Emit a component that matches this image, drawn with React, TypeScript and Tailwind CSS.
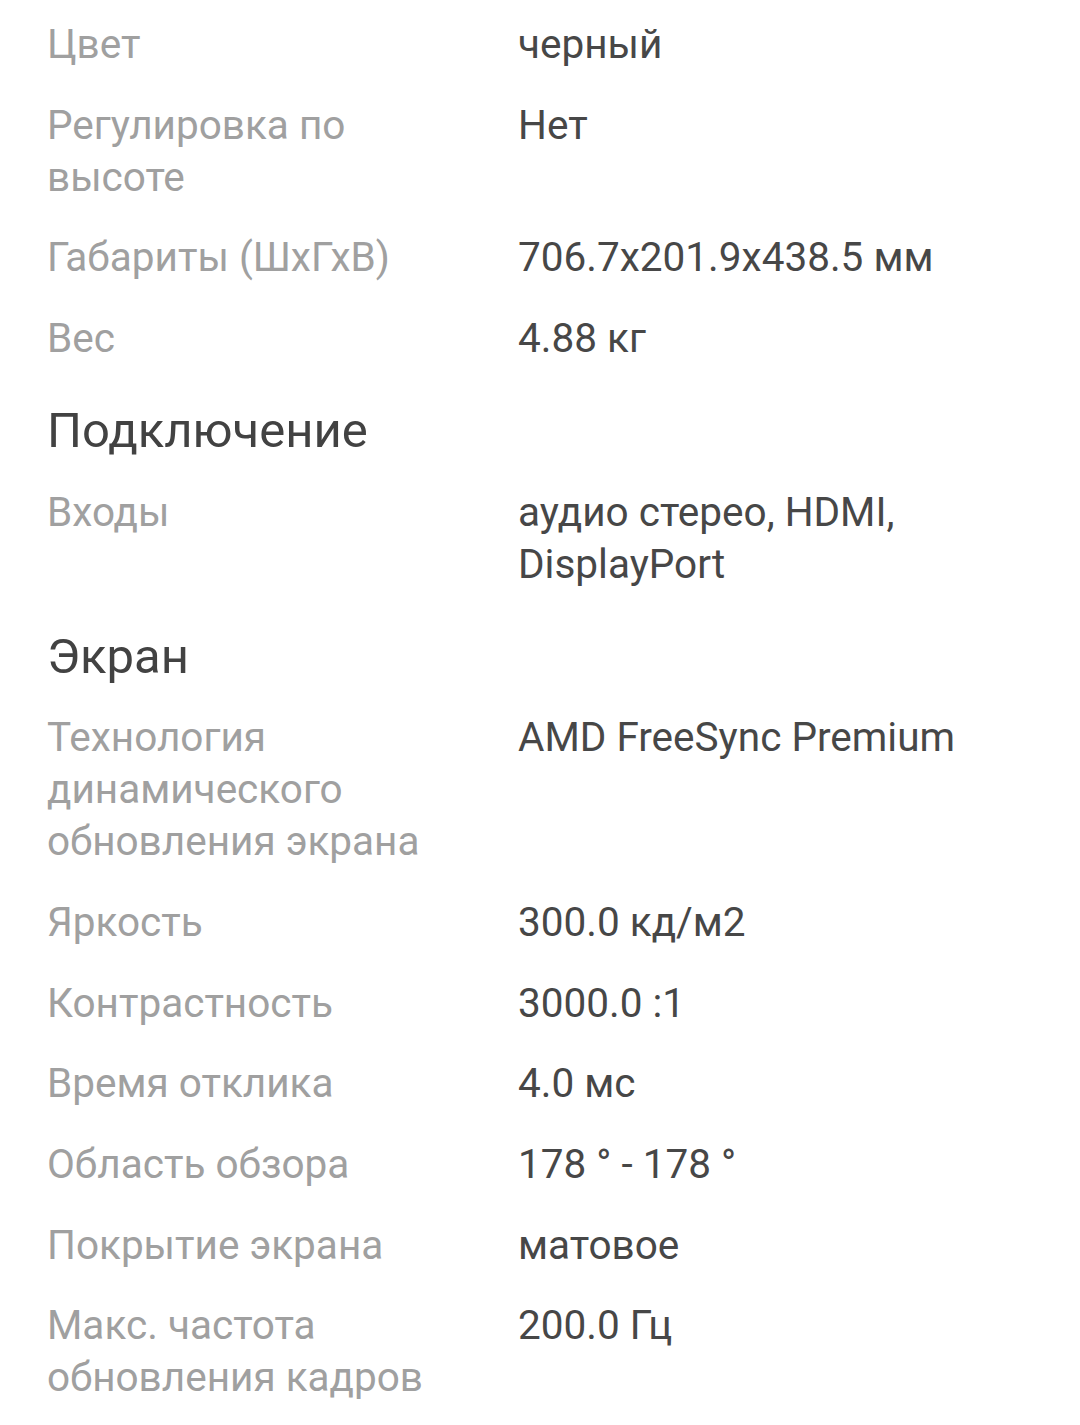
import React from 'react';

type Row = { label: string; value: string };
type Section = { title?: string; rows: Row[] };

const sections: Section[] = [
  {
    rows: [
      { label: 'Цвет', value: 'черный' },
      { label: 'Регулировка по высоте', value: 'Нет' },
      { label: 'Габариты (ШхГхВ)', value: '706.7x201.9x438.5 мм' },
      { label: 'Вес', value: '4.88 кг' },
    ],
  },
  {
    title: 'Подключение',
    rows: [{ label: 'Входы', value: 'аудио стерео, HDMI, DisplayPort' }],
  },
  {
    title: 'Экран',
    rows: [
      { label: 'Технология динамического обновления экрана', value: 'AMD FreeSync Premium' },
      { label: 'Яркость', value: '300.0 кд/м2' },
      { label: 'Контрастность', value: '3000.0 :1' },
      { label: 'Время отклика', value: '4.0 мс' },
      { label: 'Область обзора', value: '178 ° - 178 °' },
      { label: 'Покрытие экрана', value: 'матовое' },
      { label: 'Макс. частота обновления кадров', value: '200.0 Гц' },
    ],
  },
];

const SpecRow = ({ label, value }: Row) => (
  <div className="flex py-[14.35px]">
    <div className="w-[471px] shrink-0 pr-[40px] text-[#a0a0a0]">{label}</div>
    <div className="flex-1 pr-10 text-[#474747]">{value}</div>
  </div>
);

export default function App() {
  return (
    <div
      className="min-h-[1425px] bg-white pl-[47px] pt-[3.5px] text-[40.5px] leading-[52px]"
      style={{ fontFamily: 'Roboto, "Noto Sans", sans-serif' }}
    >
      {sections.map((s, i) => (
        <div key={i}>
          {s.title && (
            <h2 className="pt-[27px] pb-[14px] text-[49px] leading-[52px] text-[#424242]">{s.title}</h2>
          )}
          {s.rows.map((r) => (
            <SpecRow key={r.label} {...r} />
          ))}
        </div>
      ))}
    </div>
  );
}
